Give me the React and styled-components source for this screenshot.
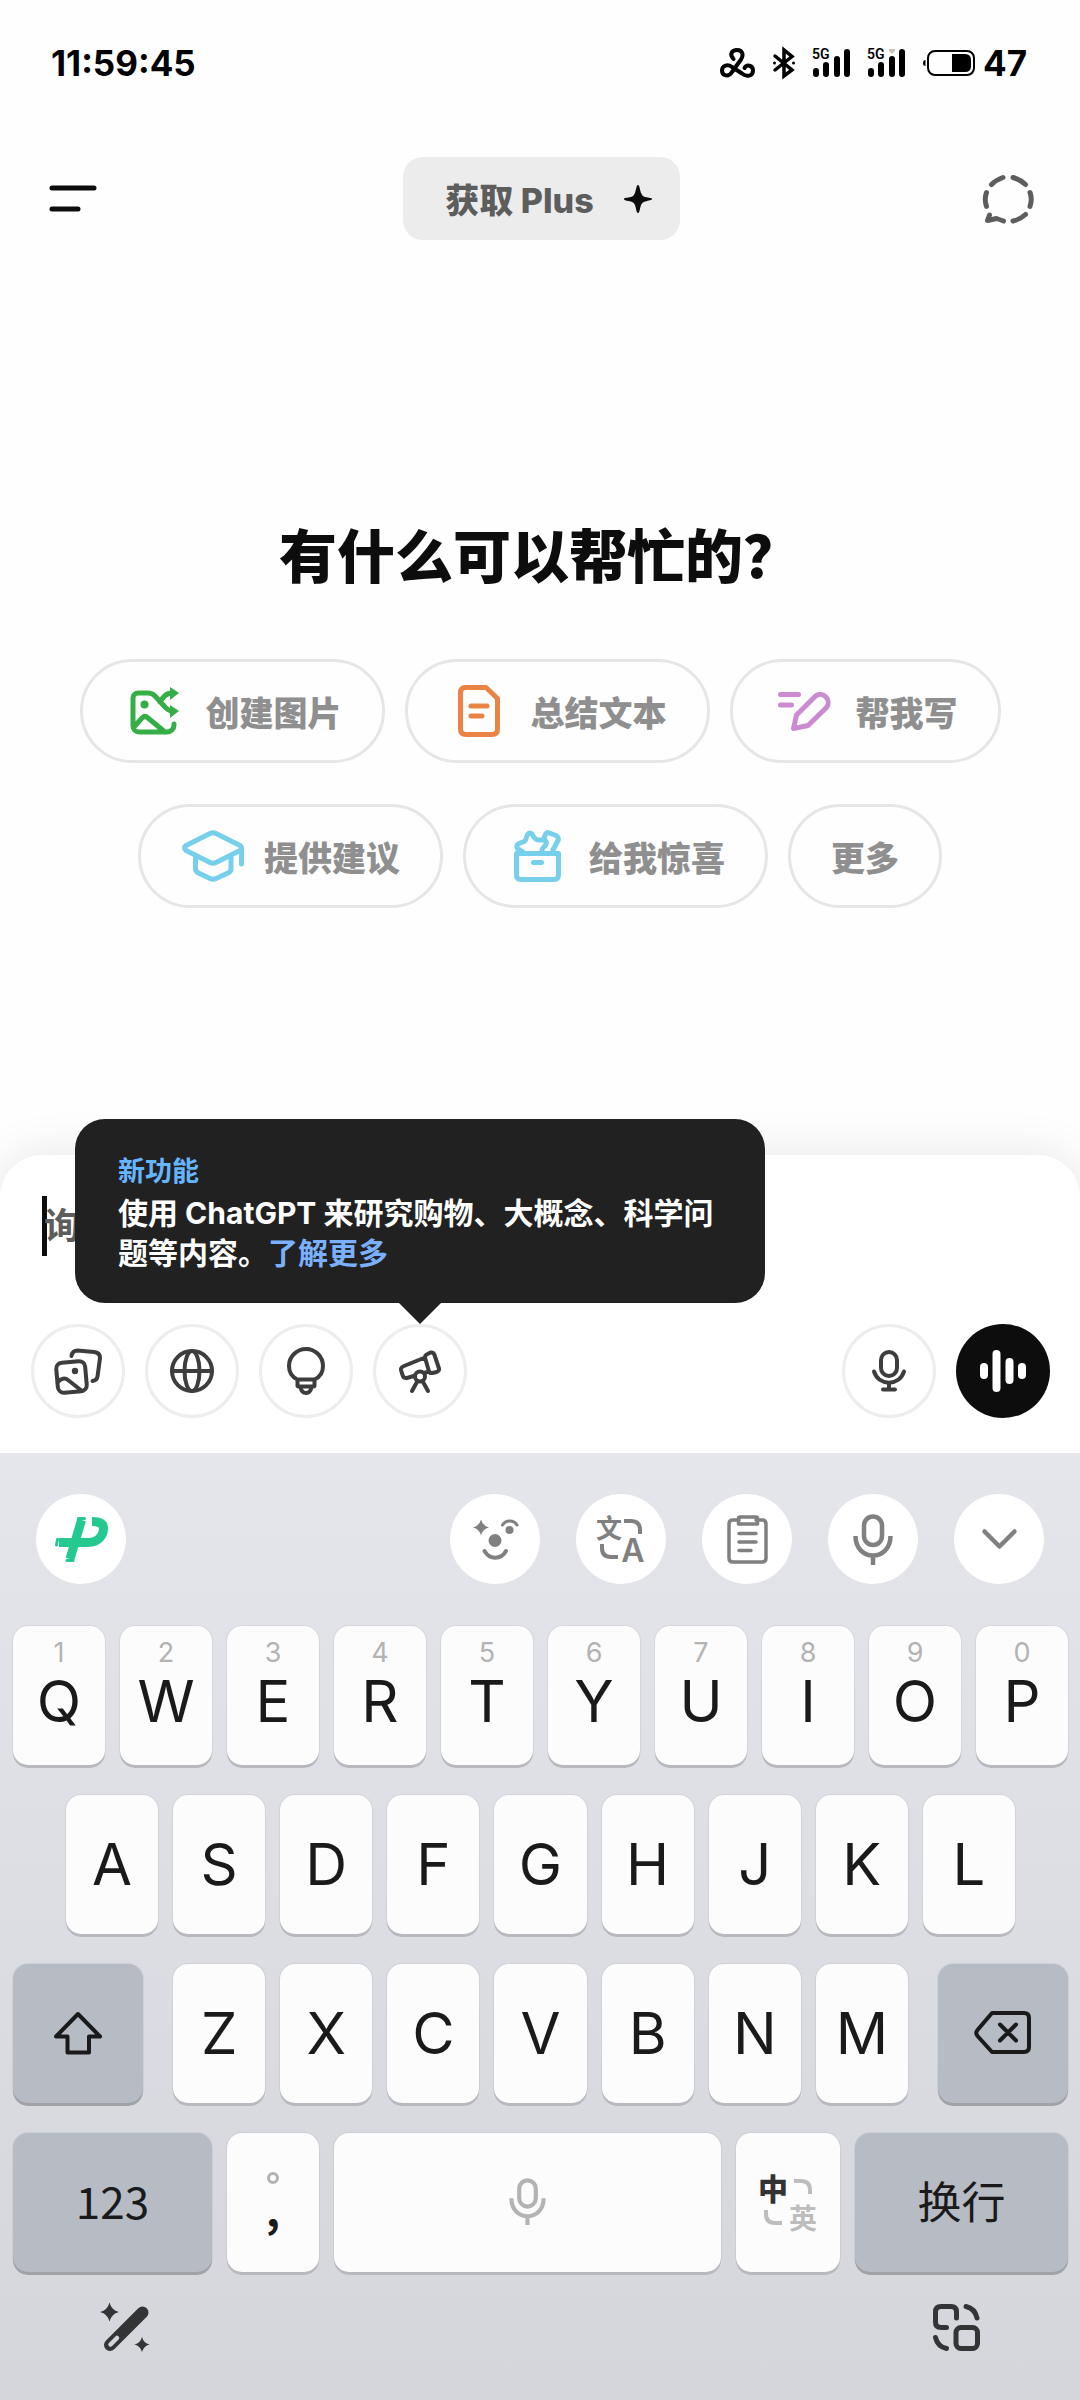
import React from "react";
import styled, { createGlobalStyle, css } from "styled-components";

const GlobalStyle = createGlobalStyle`
  *, *::before, *::after { box-sizing: border-box; }
  body {
    margin: 0;
    background: #fefefe;
    font-family: Inter, "Noto Sans CJK SC", sans-serif;
  }
  button {
    font-family: inherit;
    margin: 0;
    padding: 0;
    border: 0;
    background: none;
    color: inherit;
    cursor: pointer;
  }
  svg { display: block; flex: none; overflow: visible; }
`;

/* ---------- page ---------- */

const Screen = styled.main`
  display: flex;
  flex-direction: column;
  min-height: 100vh;
  background: #fefefe;
`;

const StatusBar = styled.header`
  display: flex;
  align-items: center;
  justify-content: space-between;
  height: 126px;
  padding: 0 53px 0 51px;
  color: #000;
  font-size: 35px;
  font-weight: 700;
`;

const StatusIcons = styled.div`
  display: flex;
  align-items: center;
  gap: 18px;
`;

const Battery = styled.div`
  display: flex;
  align-items: center;
  gap: 8px;
`;

const TopBar = styled.nav`
  display: flex;
  align-items: center;
  justify-content: space-between;
  height: 145px;
  padding: 0 46px 0 49px;
`;

const BarButton = styled.button`
  display: flex;
  align-items: center;
  width: 52px;
  height: 52px;
  color: ${(p) => p.$tone};
`;

const PlusButton = styled.button`
  display: flex;
  align-items: center;
  gap: 30px;
  height: 83px;
  padding: 0 28px 0 42px;
  border-radius: 20px;
  background: #ececec;
  color: #5d5d5d;
  font-size: 34px;
  font-weight: 800;
  white-space: nowrap;
`;

const Hero = styled.section`
  flex: 1;
  display: flex;
  flex-direction: column;
  align-items: center;
  justify-content: center;
  gap: 71px;
`;

const Heading = styled.h1`
  margin: 0;
  color: #0d0d0d;
  font-family: "Noto Sans CJK SC", sans-serif;
  font-size: 58px;
  font-weight: 900;
  line-height: 70px;
`;

const ChipRows = styled.div`
  display: flex;
  flex-direction: column;
  align-items: center;
  gap: 41px;
`;

const ChipRow = styled.div`
  display: flex;
  justify-content: center;
  gap: 20px;
`;

const Chip = styled.button`
  display: flex;
  align-items: center;
  gap: 20px;
  height: 104px;
  padding: 0 40px;
  border: 3px solid #e6e6e6;
  border-radius: 52px;
  color: #8f8f8f;
  font-size: 34px;
  font-weight: 900;
  white-space: nowrap;
`;

const ChipIcon = styled.span`
  display: flex;
  justify-content: center;
  width: 63px;
  color: ${(p) => p.$tone};
`;

/* ---------- composer ---------- */

const Composer = styled.form`
  display: flex;
  flex-direction: column;
  gap: 68px;
  padding: 41px 30px 35px 31px;
  border-radius: 42px 42px 0 0;
  background: #fff;
  box-shadow: 0 0 48px rgba(0, 0, 0, 0.1);
`;

const Field = styled.label`
  display: flex;
  align-items: center;
  height: 60px;
  padding-left: 11px;
`;

const Caret = styled.span`
  width: 5px;
  height: 60px;
  margin-right: -3px;
  background: #0d0d0d;
`;

const Prompt = styled.input`
  flex: 1;
  min-width: 0;
  padding: 0;
  border: 0;
  outline: 0;
  background: none;
  color: #0d0d0d;
  font-family: inherit;
  font-size: 36px;
  font-weight: 700;
  &::placeholder { color: #5d5d5d; opacity: 1; }
`;

const Tools = styled.div`
  display: flex;
  gap: 20px;
`;

const Spacer = styled.span`
  flex: 1;
`;

const RoundButton = styled.button`
  display: flex;
  align-items: center;
  justify-content: center;
  width: 94px;
  height: 94px;
  border-radius: 50%;
  ${(p) =>
    p.$solid
      ? css`
          background: #0d0d0d;
          color: #fff;
        `
      : css`
          border: 3px solid #ededed;
          color: #3d3d3d;
        `}
`;

const TooltipAnchor = styled.div`
  position: relative;
`;

const Tooltip = styled.div`
  position: absolute;
  bottom: calc(100% + 21px);
  left: 50%;
  width: 690px;
  padding: 37px 43px 30px;
  transform: translateX(-50%);
  border-radius: 30px;
  background: #212121;
  color: #fff;
  &::after {
    content: "";
    position: absolute;
    top: 100%;
    left: 50%;
    transform: translateX(-50%);
    border: 21px solid transparent;
    border-bottom-width: 0;
    border-top-color: #212121;
  }
`;

const TooltipLabel = styled.div`
  margin-bottom: 5px;
  color: #66b5ff;
  font-size: 27px;
  font-weight: 700;
  line-height: 32px;
`;

const TooltipText = styled.p`
  margin: 0;
  font-size: 30px;
  font-weight: 700;
  line-height: 40px;
`;

const MoreLink = styled.a`
  display: inline-block;
  color: #7ab0ff;
  text-decoration: none;
`;

/* ---------- keyboard ---------- */

const Keyboard = styled.section`
  padding-top: 41px;
  background: linear-gradient(#e5e6eb, #d9dadf 70%, #d5d6db);
`;

const KeyboardTools = styled.div`
  display: flex;
  gap: 36px;
  padding: 0 36px 42px;
`;

const ToolButton = styled.button`
  display: flex;
  align-items: center;
  justify-content: center;
  width: 90px;
  height: 90px;
  border-radius: 50%;
  background: #fff;
  color: #808080;
`;

const Keys = styled.div`
  display: flex;
  flex-direction: column;
  gap: 30px;
  padding: 0 12px 0 13px;
`;

const KeyRow = styled.div`
  display: flex;
  gap: 15px;
  padding: 0 ${(p) => p.$inset || 0}px;
`;

const Key = styled.button`
  display: flex;
  flex-direction: column;
  align-items: center;
  justify-content: center;
  flex: ${(p) => p.$span || 92} 1 0;
  min-width: 0;
  height: 139px;
  margin: 0 ${(p) => p.$after || 0}px 0 ${(p) => p.$before || 0}px;
  padding-bottom: 2px;
  border-radius: 15px;
  background: ${(p) => (p.$dark ? "#b6bbc4" : "#fcfcfc")};
  box-shadow: 0 3px 0 ${(p) => (p.$dark ? "#a0a2a6" : "#b8b9be")},
    0 0 0 1px rgba(0, 0, 0, 0.05);
  color: #1a1a1a;
  font-size: ${(p) => (p.$word ? 44 : 58)}px;
  line-height: 66px;
`;

const WordLabel = styled.span`
  padding-bottom: 4px;
  font-family: "Noto Sans CJK SC", sans-serif;
  font-weight: 400;
`;

const Hint = styled.span`
  color: #b3b3b3;
  font-size: 27px;
  line-height: 30px;
`;

const HintedLetter = styled.span`
  padding-bottom: 18px;
`;

const FullStop = styled.span`
  width: 12px;
  height: 12px;
  border: 3px solid #b3b3b3;
  border-radius: 50%;
`;

const Comma = styled.span`
  font-family: "Noto Sans CJK SC", sans-serif;
  font-size: 44px;
  font-weight: 700;
  line-height: 48px;
`;

const Swap = styled.span`
  display: grid;
  grid-template-columns: repeat(2, 30px);
  grid-template-rows: repeat(2, 30px);
  place-items: center;
  font-family: "Noto Sans CJK SC", sans-serif;
  font-size: 30px;
  line-height: 30px;
  font-weight: 900;
  color: #333;
`;

const SwapTo = styled.span`
  color: #bdbdbd;
  font-size: 28px;
  font-weight: 700;
`;

const ToolSwap = styled.span`
  display: grid;
  grid-template-columns: repeat(2, 24px);
  grid-template-rows: repeat(2, 24px);
  place-items: center;
  font-family: "Noto Sans CJK SC", sans-serif;
  font-size: 26px;
  line-height: 24px;
  font-weight: 700;
`;

const Latin = styled.span`
  font-family: Inter, sans-serif;
  font-size: 32px;
  font-weight: 600;
`;

const KeyboardFooter = styled.div`
  display: flex;
  justify-content: space-between;
  padding: 31px 100px 49px;
  color: #333436;
`;

/* ---------- icons ---------- */

const Icon = ({ w, h, stroke = 4, children }) => (
  <svg
    width={w}
    height={h}
    viewBox={`0 0 ${w} ${h}`}
    fill="none"
    stroke="currentColor"
    strokeWidth={stroke}
    strokeLinecap="round"
    strokeLinejoin="round"
    aria-hidden="true"
  >
    {children}
  </svg>
);

const solid = { fill: "currentColor", stroke: "none" };

const star = (x, y, r) => {
  const k = r * 0.2;
  return `M${x} ${y - r}Q${x + k} ${y - k} ${x + r} ${y}Q${x + k} ${y + k} ${x} ${y + r}Q${x - k} ${y + k} ${x - r} ${y}Q${x - k} ${y - k} ${x} ${y - r}Z`;
};

const LoopsIcon = () => (
  <Icon w={35} h={30}>
    <path d="M13.5 11C9 6 12 2 17 2c5.500 0 7 5 4 9.500L12 24C8.500 29.500 2 28 2 22.500 2 17 8 16 12 19l10 6.500C27 29.500 33 28 33 22.500 33 17 26.500 16 24.500 20" />
  </Icon>
);

const BluetoothIcon = () => (
  <Icon w={22} h={30} stroke={3.5}>
    <path d="M2 8l17 14-8 6V2l8 6.500L2 22" strokeLinejoin="miter" />
    <circle cx="1.500" cy="15" r="1.500" {...solid} />
    <circle cx="20.500" cy="15" r="1.500" {...solid} />
  </Icon>
);

const SignalIcon = ({ weak }) => (
  <Icon w={37} h={29} stroke={0}>
    <text x="-1" y="10" fontSize="14" fontWeight="600" fontFamily="Roboto, sans-serif" {...solid}>5G</text>
    <rect x="0" y="19" width="6" height="9" rx="3" {...solid} />
    <rect x="10" y="13" width="6" height="15" rx="3" {...solid} />
    <rect x="21" y="7" width="6" height="21" rx="3" {...solid} />
    <rect x="31" y="0" width="6" height="28" rx="3" {...solid} />
    {weak && <path d="M21 0h6v2l-3 3-3-3z" fill="#c4c4c4" />}
  </Icon>
);

const BatteryIcon = () => (
  <Icon w={52} h={26} stroke={2}>
    <path d="M2.500 10Q0 10 0 13t2.500 3z" {...solid} />
    <rect x="5" y="1" width="46" height="24" rx="7" />
    <path d="M29 4h13q6 0 6 6v6q0 6-6 6H29z" {...solid} />
  </Icon>
);

const MenuIcon = () => (
  <Icon w={48} h={27} stroke={5}>
    <path d="M3 3h42M3 24h26" />
  </Icon>
);

const SparkIcon = () => (
  <svg width="28" height="28" viewBox="0 0 28 28" aria-hidden="true">
    <path d="M14 0C15.500 0 15.500 3 17 8q1 3 4 4c4 1 7 .7 7 2s-3 1.500-7 2.500q-3 .5-4 3.500c-1.500 5-1.500 8-3 8s-1.500-3-3-8q-1-3-4-3.500C3 15.500 0 15.500 0 14s3-1 7-2q3-1 4-4c1.500-5 1.500-8 3-8z" fill="#0d0d0d" />
  </svg>
);

const TempChatIcon = () => (
  <Icon w={52} h={48} stroke={5}>
    <path d="M9.500 9.500Q14 5 21 2.500M31 2.500q7 2 12.500 7M48 17.500q2.500 6.500 0 14M4.500 17.500q-2.500 6.500 0 14M43.500 39.500Q38 44.500 31 46M7.500 40L5.500 45.500q5-1 9-2 3 1 7 2.500" />
  </Icon>
);

const CreateImageIcon = () => (
  <Icon w={49} h={48} stroke={5}>
    <path d="M44 37v1a7 7 0 0 1-7 7H9a6 6 0 0 1-6-6V11a5 5 0 0 1 5-5h10c3 0 5 1 7 3l10 11c2 2 4 4 7 4M30 15c3-5 6-9 12-9M4 40l8-9c2-2 4-2 6 0l17 14" />
    <circle cx="14.500" cy="17.500" r="4" {...solid} />
    <path d="M40 0l9 6-9 7zM40 18l9 6-9 7z" {...solid} />
  </Icon>
);

const DocumentIcon = () => (
  <Icon w={42} h={52} stroke={5}>
    <path d="M7.500 2.500H28l11.500 11V44q0 5.500-5.500 5.500H8q-5.500 0-5.500-5.500V8q0-5.500 5-5.500zM13 21h16M13 31h11" />
  </Icon>
);

const WriteIcon = () => (
  <Icon w={53} h={40} stroke={5}>
    <path d="M2.500 3.500h18M2.500 14h11M15.500 37.500l3-13.500L37 5.500a8 8 0 0 1 11.500 11L30 34.500z" />
  </Icon>
);

const AdviceIcon = () => (
  <Icon w={62} h={52} stroke={5}>
    <path d="M28 3.500q3-1.500 6 0l24 12q3 2.500 0 5L34 32.500q-3 1.500-6 0L4 20.500q-3-2.500 0-5zM59.500 18v16M13.500 27v12q0 2.500 3 4L28 48.500q3 1.500 6 0L46 43q3-1.500 3-4V27" />
  </Icon>
);

const SurpriseIcon = () => (
  <Icon w={47} h={52} stroke={5}>
    <path d="M2.500 23.500h42V45q0 4.500-4.500 4.500H7Q2.500 49.500 2.500 45zM19.500 32.500h8M9 22l-5.500-3.500q-2-3 1.500-5l5-2q2-1 2.500-4.500 2-6 5.500-3 3 6 6.500 6H31M28 21q0-3 3-5 3-4-1-7 1-6 4-6.500l8 3q3 1.500 2 5L39 20" />
  </Icon>
);

const PhotosIcon = () => (
  <Icon w={48} h={47} stroke={4}>
    <path d="M17.500 8q1-5.500 6-5.500L40 4q6 .5 6 6l-2.500 18.500q-.5 4-5 4.500" />
    <rect x="3" y="14" width="29" height="30" rx="6" transform="rotate(-5 17 29)" />
    <circle cx="21" cy="23" r="3.200" {...solid} />
    <path d="M4 34c3-3.500 7-4.500 10-2l14 11" />
  </Icon>
);

const GlobeIcon = () => (
  <Icon w={44} h={44} stroke={4}>
    <circle cx="22" cy="22" r="20" />
    <ellipse cx="22" cy="22" rx="7.500" ry="20" />
    <path d="M2 22h40" />
  </Icon>
);

const BulbIcon = () => (
  <Icon w={38} h={48} stroke={4}>
    <path d="M10.500 32.500C5 30 2 25 2 19a17 17 0 0 1 34 0c0 6-3 11-8.500 13.500v6.500l-3 1q-1 6-5.500 6t-5.500-6l-3-1zM10.500 32.500h17M12 39.500h14" />
  </Icon>
);

const TelescopeIcon = () => (
  <Icon w={42} h={43} stroke={4}>
    <path d="M26 7.500L5 16q-3.500 1.500-3 4l1.500 5q1 3.500 4.500 3L30 21.500M26 7.500l4 14q1 2 3.500 1.500l4-1q3-1 2.500-3.500L35.500 5q-1-3-4-2.500l-3 1.500q-2.500 1-2.500 3.500z" />
    <circle cx="21" cy="26.500" r="5" fill="#fff" />
    <path d="M18.500 31L13 41M23.500 31L29 41" />
  </Icon>
);

const MicIcon = () => (
  <Icon w={34} h={42} stroke={4}>
    <rect x="9" y="2" width="16" height="24" rx="8" />
    <path d="M2 21.500c5 15 25 15 30 0M17 33v6M11 39.500h12" />
  </Icon>
);

const VoiceIcon = () => (
  <Icon w={46} h={42} stroke={8}>
    <path d="M4 17v8M16.500 4v34M29.500 12v18M42 17v8" />
  </Icon>
);

const LogoIcon = () => (
  <svg width="53" height="45" viewBox="0 0 53 45" fill="none" stroke="#24c990" strokeWidth="9" aria-hidden="true">
    <path d="M4 25.500h29c11 0 15.500-8 15.500-14 0-5-4-7-11.500-7" />
    <path d="M26.500 3L15 42" />
    <path d="M2.500 22.500L1.500 28M23.500 1.500h6M12 43.500h6" strokeWidth="3" strokeLinecap="round" />
  </svg>
);

const FaceIcon = () => (
  <Icon w={45} h={41} stroke={4}>
    <path d={star(8, 8.5, 8)} {...solid} />
    <circle cx="22" cy="21.500" r="6.500" {...solid} />
    <circle cx="36.500" cy="11" r="4" {...solid} />
    <path d="M11.500 32c5 9 16.500 9 21.500 0" />
    <path d="M29.500 6c3-5.500 11.500-5.500 14.500 0" strokeWidth="3" />
  </Icon>
);

const ClipboardIcon = () => (
  <Icon w={41} h={49} stroke={3.5}>
    <path d="M12 5H6Q2 5 2 9v34q0 4 4 4h29q4 0 4-4V9q0-4-4-4h-6M13 2h16q1.500 0 1.500 1.500V9H11.500V3.500Q11.500 2 13 2zM12 18.500h17M12 27h17M12 35.500h12" />
  </Icon>
);

const KeyboardMicIcon = ({ w = 40, h = 51 }) => (
  <svg width={w} height={h} viewBox="0 0 40 51" fill="none" stroke="currentColor" strokeWidth="4.500" aria-hidden="true">
    <rect x="11" y="2.500" width="18" height="28.500" rx="9" />
    <path d="M2.500 22c0 26 35 26 35 0M20 41v10" />
  </svg>
);

const ChevronIcon = () => (
  <Icon w={35} h={20} stroke={4.5}>
    <path d="M2.500 2.500L17.500 17.500l15-15" />
  </Icon>
);

const ArcTop = () => (
  <svg width="18" height="16" viewBox="0 0 18 16" fill="none" stroke="currentColor" strokeWidth="4" aria-hidden="true">
    <path d="M0 2h7q9 0 9 9v4" />
  </svg>
);

const ArcBottom = () => (
  <svg width="18" height="16" viewBox="0 0 18 16" fill="none" stroke="currentColor" strokeWidth="4" aria-hidden="true">
    <path d="M2 1v4q0 9 9 9h7" />
  </svg>
);

const ShiftIcon = () => (
  <Icon w={50} h={44}>
    <path d="M25 3L47 25.500H36V41.500H14.500V25.500H3z" />
  </Icon>
);

const BackspaceIcon = () => (
  <Icon w={57} h={44}>
    <path d="M18 2h32q5 0 5 5v29q0 5-5 5H18L3.500 25q-2.500-3 0-6zM26 13.500l16 16M42 13.500l-16 16" />
  </Icon>
);

const WandIcon = () => (
  <Icon w={49} h={48} stroke={12}>
    <path d="M10 42L42.500 9.500" />
    <path d="M10.500 41.500L17 35" stroke="#d5d6db" strokeWidth="4.500" />
    <path d={star(9.5, 9, 9.5)} {...solid} />
    <path d={star(42, 41.5, 7.5)} {...solid} />
  </Icon>
);

const LayoutIcon = () => (
  <Icon w={47} h={47} stroke={5}>
    <path d="M13.500 23.500H8q-5.500 0-5.500-5.500V8Q2.500 2.500 8 2.500h10q5.500 0 5.500 5.500v6" />
    <rect x="23" y="23.500" width="21.500" height="21" rx="5" />
    <path d="M33 2.500q9 2 11 11.500M2.500 33.500q2 9 11 11" />
  </Icon>
);

/* ---------- content ---------- */

const chipRows = [
  [
    { label: "创建图片", tone: "#35ae47", icon: <CreateImageIcon /> },
    { label: "总结文本", tone: "#ea8444", icon: <DocumentIcon /> },
    { label: "帮我写", tone: "#cb8bd0", icon: <WriteIcon /> },
  ],
  [
    { label: "提供建议", tone: "#76d0eb", icon: <AdviceIcon /> },
    { label: "给我惊喜", tone: "#76d0eb", icon: <SurpriseIcon /> },
    { label: "更多" },
  ],
];

const composerTools = [
  { label: "图片", icon: <PhotosIcon /> },
  { label: "搜索", icon: <GlobeIcon /> },
  { label: "思考", icon: <BulbIcon /> },
];

const keyboardTools = [
  { label: "表情", icon: <FaceIcon /> },
  {
    label: "翻译",
    icon: (
      <ToolSwap>
        <span>文</span>
        <ArcTop />
        <ArcBottom />
        <Latin>A</Latin>
      </ToolSwap>
    ),
  },
  { label: "剪贴板", icon: <ClipboardIcon /> },
  { label: "语音", icon: <KeyboardMicIcon /> },
  { label: "收起", icon: <ChevronIcon /> },
];

export default function App() {
  return (
    <>
      <GlobalStyle />
      <Screen>
        <StatusBar>
          <time>11:59:45</time>
          <StatusIcons>
            <LoopsIcon />
            <BluetoothIcon />
            <SignalIcon />
            <SignalIcon weak />
            <Battery>
              <BatteryIcon />
              <span>47</span>
            </Battery>
          </StatusIcons>
        </StatusBar>

        <TopBar>
          <BarButton $tone="#0d0d0d" aria-label="菜单"><MenuIcon /></BarButton>
          <PlusButton>
            <span>获取 Plus</span>
            <SparkIcon />
          </PlusButton>
          <BarButton $tone="#5d5d5d" aria-label="临时聊天"><TempChatIcon /></BarButton>
        </TopBar>

        <Hero>
          <Heading>有什么可以帮忙的？</Heading>
          <ChipRows>
            {chipRows.map((row, i) => (
              <ChipRow key={i}>
                {row.map((chip) => (
                  <Chip key={chip.label}>
                    {chip.icon && <ChipIcon $tone={chip.tone}>{chip.icon}</ChipIcon>}
                    {chip.label}
                  </Chip>
                ))}
              </ChipRow>
            ))}
          </ChipRows>
        </Hero>

        <Composer onSubmit={(e) => e.preventDefault()}>
          <Field>
            <Caret />
            <Prompt type="text" placeholder="询问" aria-label="询问" />
          </Field>
          <Tools>
            {composerTools.map((tool) => (
              <RoundButton type="button" key={tool.label} aria-label={tool.label}>
                {tool.icon}
              </RoundButton>
            ))}
            <TooltipAnchor>
              <RoundButton type="button" aria-label="研究"><TelescopeIcon /></RoundButton>
              <Tooltip role="tooltip">
                <TooltipLabel>新功能</TooltipLabel>
                <TooltipText>
                  使用 ChatGPT 来研究购物、大概念、科学问题等内容。
                  <MoreLink href="#more">了解更多</MoreLink>
                </TooltipText>
              </Tooltip>
            </TooltipAnchor>
            <Spacer />
            <RoundButton type="button" aria-label="听写"><MicIcon /></RoundButton>
            <RoundButton type="button" $solid aria-label="语音模式"><VoiceIcon /></RoundButton>
          </Tools>
        </Composer>

        <Keyboard>
          <KeyboardTools>
            <ToolButton aria-label="输入法"><LogoIcon /></ToolButton>
            <Spacer />
            {keyboardTools.map((tool) => (
              <ToolButton key={tool.label} aria-label={tool.label}>{tool.icon}</ToolButton>
            ))}
          </KeyboardTools>
          <Keys>
            <KeyRow>
              {[..."QWERTYUIOP"].map((letter, i) => (
                <Key key={letter}>
                  <Hint>{(i + 1) % 10}</Hint>
                  <HintedLetter>{letter}</HintedLetter>
                </Key>
              ))}
            </KeyRow>
            <KeyRow $inset={53}>
              {[..."ASDFGHJKL"].map((letter) => (
                <Key key={letter}>{letter}</Key>
              ))}
            </KeyRow>
            <KeyRow>
              <Key $dark $span={130} $after={15} aria-label="大写"><ShiftIcon /></Key>
              {[..."ZXCVBNM"].map((letter) => (
                <Key key={letter}>{letter}</Key>
              ))}
              <Key $dark $span={130} $before={15} aria-label="删除"><BackspaceIcon /></Key>
            </KeyRow>
            <KeyRow>
              <Key $dark $word $span={199}><WordLabel>123</WordLabel></Key>
              <Key aria-label="标点">
                <FullStop />
                <Comma>,</Comma>
              </Key>
              <Key $span={387} aria-label="空格">
                <Hint><KeyboardMicIcon w={37} h={47} /></Hint>
              </Key>
              <Key $span={104}>
                <Swap>
                  <span>中</span>
                  <SwapTo><ArcTop /></SwapTo>
                  <SwapTo><ArcBottom /></SwapTo>
                  <SwapTo>英</SwapTo>
                </Swap>
              </Key>
              <Key $dark $word $span={213}><WordLabel>换行</WordLabel></Key>
            </KeyRow>
          </Keys>
          <KeyboardFooter>
            <button aria-label="工具"><WandIcon /></button>
            <button aria-label="切换键盘"><LayoutIcon /></button>
          </KeyboardFooter>
        </Keyboard>
      </Screen>
    </>
  );
}
